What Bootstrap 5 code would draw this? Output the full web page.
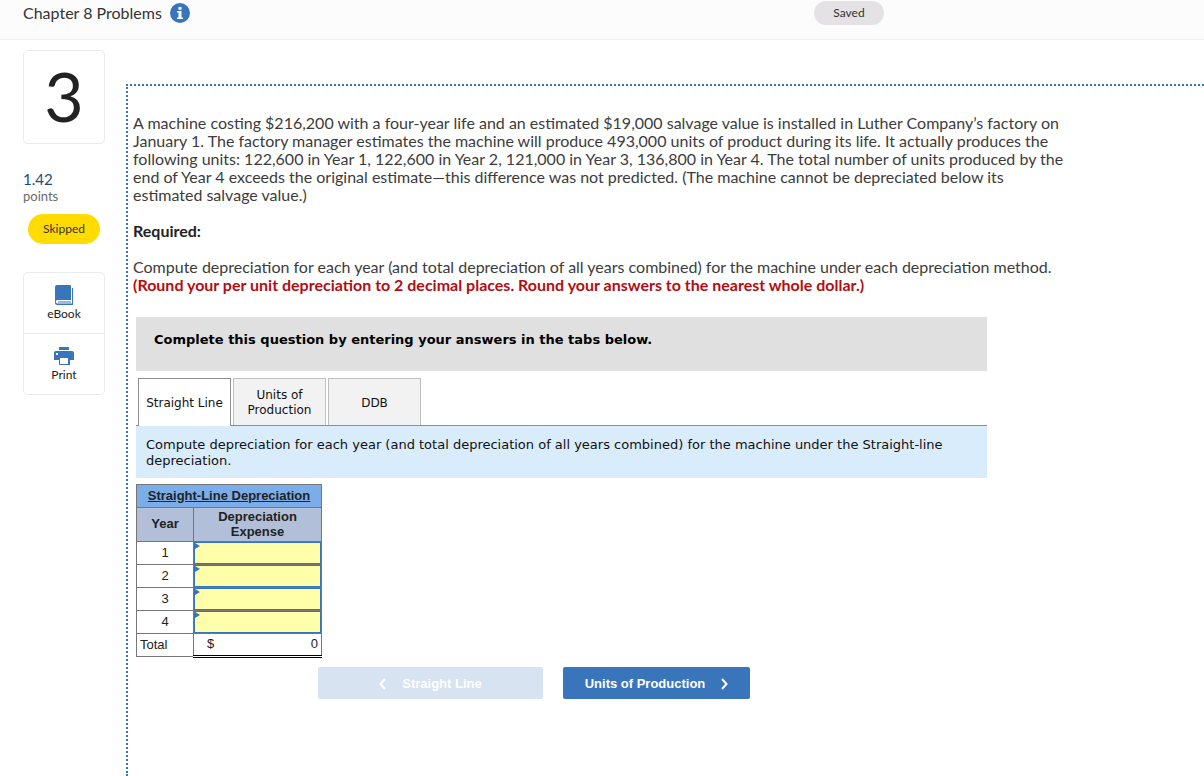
<!DOCTYPE html>
<html lang="en">
<head>
<meta charset="utf-8">
<meta name="viewport" content="width=device-width, initial-scale=1">
<title>Chapter 8 Problems</title>
<link rel="stylesheet" href="https://cdn.jsdelivr.net/npm/bootstrap@5.3.0/dist/css/bootstrap.min.css">
<style>
:root { --brand: #3875ba; --rule: #ebebeb; }
body { font-family: Lato, "Open Sans", sans-serif; font-size: 16px; line-height: 18px; color: #333; background: #fff; }
.topbar { height: 40px; background: #fcfcfc; border-bottom: 1px solid #f0f0f0; padding: 0 23px; }
.topbar-title { font-size: 16px; line-height: 26px; font-weight: 400; }
.info-btn { width: 20px; height: 20px; margin-top: 3px; }
.saved-pill { background: #e4e2e5; color: #333; font-size: 12px; width: 70px; height: 24px; margin-top: 1px; margin-right: 297px; }
.side { width: 82px; margin-left: 23px; padding-top: 10px; }
.frame { border: 1px solid var(--rule); border-radius: 5px; }
.q-number { height: 94px; font-size: 68px; line-height: 90px; color: #222; }
.points { margin-top: 26px; line-height: 18px; }
.points-value { font-size: 15px; color: #1c4980; }
.points-label { font-size: 13px; line-height: 16px; color: #6b6b6b; }
.skip-pill { background: #ffdb00; font-size: 12px; width: 72px; height: 30px; margin-top: 10px; }
.tools { margin-top: 28px; }
.tool { height: 60px; font-size: 12px; line-height: 14px; color: #222; padding-top: 12px; }
.tool svg { margin-bottom: 2px; }
.tool + .tool { height: 61px; border-top: 1px solid var(--rule); }
.question { margin: 44px 0 0 21px; padding: 28px 5px 0; border: 2px dotted var(--brand); border-right: 0; border-bottom: 0; min-height: calc(100vh - 84px); }
.stem { color: #3c3c3c; }
.stem p { margin-bottom: 18px; }
.stem strong { color: #222; }
.stem .warn { color: #b30d12; }
.work { margin: 23px 0 0 3px; max-width: 851px; font-family: "DejaVu Sans", sans-serif; font-size: 13px; line-height: 16px; color: #000; }
.notice { background: #e0e0e0; height: 54px; padding: 15px 18px; }
.steps { margin-top: 7px; padding-left: 2px; gap: 2px; border-bottom: 1px solid #8e8e8e; --bs-nav-link-color: #000; }
.steps .nav-link { width: 93px; height: 47px; padding: 2px 4px 0; border: 1px solid #c0c0c0; border-bottom: 0; border-radius: 0; background: #f2f2f2; color: #111; font-size: 12px; line-height: 15px; }
.steps .nav-link.active { height: 48px; margin-bottom: -1px; border-color: #8e8e8e; background: #fff; color: #111; }
.prompt { background: #d9ecfb; padding: 11px 10px 9px; color: #111; }
.sheet { margin-top: 6px; width: 186px; table-layout: fixed; border-collapse: collapse; font-family: "Liberation Sans", Arial, sans-serif; font-size: 13px; line-height: 15px; color: #222; }
.sheet th, .sheet td { border: 1px solid #767676; padding: 0; text-align: center; height: 23px; }
.sheet th { padding-bottom: 2px; }
.sheet .sheet-title { background: #7baee8; text-decoration: underline; }
.sheet .sheet-head th { background: #b1bfd9; height: 34px; }
.sheet tbody th { font-weight: 400; }
.entry-cell { position: relative; }
.entry-cell::before { content: ""; position: absolute; left: 1px; top: 1px; border: solid transparent; border-width: 3px 0 3px 5px; border-left-color: var(--brand); }
.entry { display: block; width: 100%; height: 22px; border: 1px solid var(--brand); border-radius: 0; background: #ffa; padding: 0 6px; }
.sheet .total-name { text-align: left; padding-left: 3px; }
.sheet .total-cell { border-top-color: #000; border-bottom: 3px double #000; padding: 0 3px 2px 13px; }
.pager { margin-top: 9px; padding-left: 182px; gap: 20px; }
.pager .btn { --bs-btn-bg: var(--brand); --bs-btn-hover-bg: #2d63a0; --bs-btn-color: #fff; --bs-btn-hover-color: #fff; --bs-btn-disabled-bg: #d7e3f1; --bs-btn-disabled-color: #fff; --bs-btn-disabled-opacity: 1; height: 32px; padding: 1px 0 0; border: 0; border-radius: 2px; font-family: "Liberation Sans", Arial, sans-serif; font-size: 13px; font-weight: 700; gap: 16px; }
.pager .prev { width: 225px; }
.pager .next { width: 187px; }
</style>
</head>
<body>
<header class="topbar d-flex align-items-start justify-content-between">
  <div class="d-flex">
    <h1 class="topbar-title mb-0">Chapter 8 Problems</h1>
    <button type="button" class="info-btn btn p-0 border-0 d-flex ms-2" aria-label="Information">
      <svg width="20" height="20" viewBox="0 0 20 20"><circle cx="10" cy="10" r="10" fill="#3875ba"/><path fill="#fff" d="M8.500 4h3v2.800h-3zM7 8h4.500v6.500H13V16H7v-1.500h1.500v-5H7z"/></svg>
    </button>
  </div>
  <span class="saved-pill rounded-pill d-flex align-items-center justify-content-center">Saved</span>
</header>
<div class="d-flex align-items-start">
  <aside class="side flex-shrink-0">
    <div class="frame q-number text-center">3</div>
    <div class="points"><div class="points-value">1.42</div><div class="points-label">points</div></div>
    <div class="skip-pill rounded-pill d-flex align-items-center justify-content-center mx-auto">Skipped</div>
    <nav class="frame tools" aria-label="Question tools">
      <a href="#" class="tool d-flex flex-column align-items-center text-decoration-none">
        <svg width="18" height="20" viewBox="0 0 18 20"><path fill="#3875ba" d="M2 0h13a1 1 0 0 1 1 1v14H2.500a1.500 1.500 0 0 0 0 3.500H17V3h1v17H2.500A2.500 2.500 0 0 1 0 17.500V2a2 2 0 0 1 2-2zM3 16.500h13v1H3z"/></svg>eBook</a>
      <a href="#" class="tool d-flex flex-column align-items-center text-decoration-none">
        <svg width="20" height="20" viewBox="0 0 20 20"><path fill="#3875ba" d="M5 1h10v3H5zM2 5h16a2 2 0 0 1 2 2v7h-4v5H5v-5H0V7a2 2 0 0 1 2-2z"/><path fill="#fff" d="M6 12h8v6H6zM2 7h2v2H2z"/></svg>Print</a>
    </nav>
  </aside>
  <main class="question flex-grow-1">
    <div class="stem">
      <p>A machine costing $216,200 with a four-year life and an estimated $19,000 salvage value is installed in Luther Company’s factory on<br>
      January 1. The factory manager estimates the machine will produce 493,000 units of product during its life. It actually produces the<br>
      following units: 122,600 in Year 1, 122,600 in Year 2, 121,000 in Year 3, 136,800 in Year 4. The total number of units produced by the<br>
      end of Year 4 exceeds the original estimate—this difference was not predicted. (The machine cannot be depreciated below its<br>
      estimated salvage value.)</p>
      <p><strong>Required:</strong></p>
      <p class="mb-0">Compute depreciation for each year (and total depreciation of all years combined) for the machine under each depreciation method.<br>
      <strong class="warn">(Round your per unit depreciation to 2 decimal places. Round your answers to the nearest whole dollar.)</strong></p>
    </div>
    <section class="work">
      <div class="notice fw-bold">Complete this question by entering your answers in the tabs below.</div>
      <div class="steps nav" role="tablist">
        <button type="button" class="nav-link active" role="tab" aria-selected="true">Straight Line</button>
        <button type="button" class="nav-link" role="tab" aria-selected="false">Units of Production</button>
        <button type="button" class="nav-link" role="tab" aria-selected="false">DDB</button>
      </div>
      <div class="prompt">Compute depreciation for each year (and total depreciation of all years combined) for the machine under the Straight-line depreciation.</div>
      <table class="sheet">
        <colgroup><col style="width:57px"><col></colgroup>
        <thead>
          <tr><th colspan="2" class="sheet-title">Straight-Line Depreciation</th></tr>
          <tr class="sheet-head"><th scope="col">Year</th><th scope="col">Depreciation<br>Expense</th></tr>
        </thead>
        <tbody>
          <tr><th scope="row">1</th><td class="entry-cell"><input class="entry" type="text" aria-label="Year 1 depreciation expense"></td></tr>
          <tr><th scope="row">2</th><td class="entry-cell"><input class="entry" type="text" aria-label="Year 2 depreciation expense"></td></tr>
          <tr><th scope="row">3</th><td class="entry-cell"><input class="entry" type="text" aria-label="Year 3 depreciation expense"></td></tr>
          <tr><th scope="row">4</th><td class="entry-cell"><input class="entry" type="text" aria-label="Year 4 depreciation expense"></td></tr>
          <tr><th scope="row" class="total-name">Total</th><td class="total-cell"><div class="d-flex justify-content-between"><span>$</span><span>0</span></div></td></tr>
        </tbody>
      </table>
      <div class="pager d-flex">
        <button type="button" class="btn prev d-flex align-items-center justify-content-center" disabled><svg width="7" height="12" viewBox="0 0 7 12" fill="none" stroke="currentColor" stroke-width="2"><path d="M6 1 1.500 6 6 11"/></svg>Straight Line</button>
        <button type="button" class="btn next d-flex align-items-center justify-content-center">Units of Production<svg width="7" height="12" viewBox="0 0 7 12" fill="none" stroke="currentColor" stroke-width="2"><path d="M1 1 5.500 6 1 11"/></svg></button>
      </div>
    </section>
  </main>
</div>
<script src="https://cdn.jsdelivr.net/npm/bootstrap@5.3.0/dist/js/bootstrap.bundle.min.js"></script>
</body>
</html>
